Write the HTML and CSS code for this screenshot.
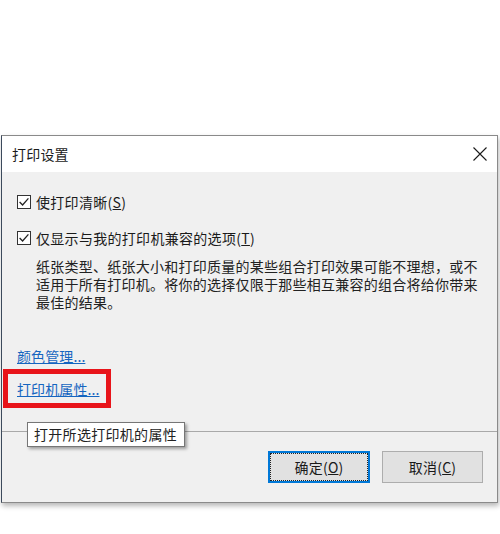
FILE: index.html
```html
<!DOCTYPE html>
<html lang="zh-CN">
<head>
<meta charset="utf-8">
<title>打印设置</title>
<link rel="stylesheet" href="styles.css">
</head>
<body>
<div class="dialog">
  <div class="titlebar">
    <span class="title">打印设置</span>
    <svg class="close" width="14" height="14" viewBox="0 0 14 14"><path d="M0.5 0.5 L13.5 13.5 M13.5 0.5 L0.5 13.5" stroke="#1a1a1a" stroke-width="1.1" fill="none"/></svg>
  </div>
  <div class="content">
    <div class="check-row">
      <svg class="checkbox" width="14" height="14" viewBox="0 0 14 14"><rect x="0.5" y="0.5" width="13" height="13" fill="#fff" stroke="#333"/><path d="M2.6 7 L5.6 10 L11.4 3.4" stroke="#222" stroke-width="1.3" fill="none"/></svg>
      <span>使打印清晰(<u>S</u>)</span>
    </div>
    <div class="check-row row2">
      <svg class="checkbox" width="14" height="14" viewBox="0 0 14 14"><rect x="0.5" y="0.5" width="13" height="13" fill="#fff" stroke="#333"/><path d="M2.6 7 L5.6 10 L11.4 3.4" stroke="#222" stroke-width="1.3" fill="none"/></svg>
      <span>仅显示与我的打印机兼容的选项(<u>T</u>)</span>
    </div>
    <p class="desc">纸张类型、纸张大小和打印质量的某些组合打印效果可能不理想，或不适用于所有打印机。将你的选择仅限于那些相互兼容的组合将给你带来最佳的结果。</p>
    <a class="link link1">颜色管理...</a>
    <a class="link link2">打印机属性...</a>
  </div>
  <div class="footer">
    <button class="btn btn-default">确定(<u>O</u>)</button>
    <button class="btn">取消(<u>C</u>)</button>
  </div>
</div>
<div class="highlight"></div>
<div class="tooltip">打开所选打印机的属性</div>
</body>
</html>
```

FILE: styles.css
```css
* { box-sizing: border-box; }
html, body {
  margin: 0;
  padding: 0;
  background: #fff;
  width: 500px;
  height: 534px;
  overflow: hidden;
}
body {
  font-family: "Noto Sans CJK SC", "Noto Sans", sans-serif;
  font-size: 14px;
  color: #1a1a1a;
  position: relative;
}
.dialog {
  margin-top: 135px;
  margin-left: 1px;
  width: 497px;
  height: 368px;
  border: 1px solid #8a8a8a;
  border-left-color: #3c4a5c;
  background: #f0f0f0;
  box-shadow: 1px 3px 5px rgba(0, 0, 0, 0.28);
  display: flex;
  flex-direction: column;
}
.titlebar {
  height: 36px;
  background: #fff;
  display: flex;
  align-items: center;
  justify-content: space-between;
  padding: 0 10px 0 10px;
}
.title { line-height: 20px; letter-spacing: 0.2px; margin-top: -1px; }
.close { margin-top: 0; }
.content {
  padding: 20px 15px 0 14px;
  height: 260px;
  border-bottom: 1px solid #a9a9a9;
  display: flex;
  flex-direction: column;
  align-items: flex-start;
}
.check-row {
  display: flex;
  align-items: center;
  height: 20px;
  gap: 5px;
  padding-left: 1px;
}
.check-row span { letter-spacing: 0.3px; }
.row2 { margin-top: 16px; }
.desc {
  margin: 10px 0 0 0;
  padding-left: 20px;
  line-height: 17.8px;
  letter-spacing: 0.25px;
  color: #222;
}
.link {
  color: #1565c0;
  text-decoration: underline;
  line-height: 20px;
  height: 20px;
  padding-left: 1px;
  letter-spacing: 0.1px;
}
.link1 { margin-top: 35px; }
.link2 { margin-top: 13px; }
.footer {
  flex: 1;
  display: flex;
  justify-content: flex-end;
  align-items: flex-start;
  gap: 12px;
  padding: 19px 14px 0 0;
}
.btn {
  width: 101px;
  height: 32px;
  font-family: inherit;
  font-size: 14px;
  color: #1a1a1a;
  background: #e1e1e1;
  border: 1px solid #adadad;
  padding: 0;
  letter-spacing: 0.2px;
}
.btn-default {
  width: 102px;
  border: 2px solid #0078d7;
  outline: 1px dotted #222;
  outline-offset: -3px;
}
.highlight {
  position: absolute;
  left: 3px;
  top: 369px;
  width: 108px;
  height: 39px;
  border: 5px solid #e8141a;
}
.tooltip {
  position: absolute;
  left: 27px;
  top: 422px;
  width: 158px;
  height: 25px;
  background: #fff;
  border: 1px solid #767676;
  box-shadow: 2px 2px 3px rgba(0, 0, 0, 0.35);
  padding-left: 6px;
  line-height: 23px;
  letter-spacing: 0.3px;
  color: #222;
}
```
